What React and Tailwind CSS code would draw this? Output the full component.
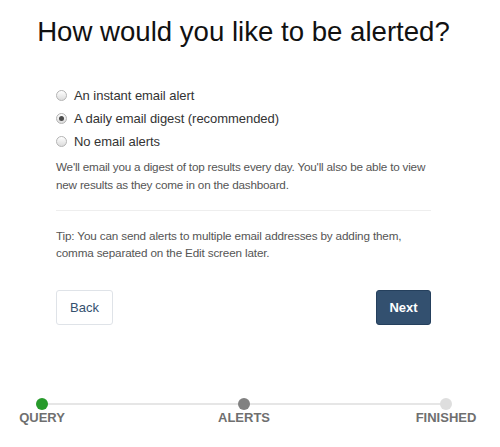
import React from "react";

function Radio({ label, checked }) {
  return (
    <label className="flex items-center h-[23px] text-[13px] text-[#333]">
      <span className="w-[11px] h-[11px] rounded-full border border-[#b4b4b4] bg-gradient-to-b from-[#ffffff] to-[#dcdcdc] flex items-center justify-center shrink-0">
        {checked && <span className="w-[5px] h-[5px] rounded-full bg-[#4a4a4a]" />}
      </span>
      <span className="ml-[7px] tracking-[-0.05px]">{label}</span>
    </label>
  );
}

function Step({ label, color }) {
  return (
    <div className="w-[12px] flex flex-col items-center">
      <div className={`w-[12px] h-[12px] rounded-full ${color}`} />
      <div className="whitespace-nowrap text-[13px] leading-[16px] font-bold text-[#6f6f6f]">{label}</div>
    </div>
  );
}

export default function App() {
  return (
    <div className="w-[487px] bg-white pb-[22px]" style={{ fontFamily: '"Liberation Sans", Arial, sans-serif' }}>
      <h1 className="pt-[16px] text-center text-[27.6px] leading-[32px] text-[#111] font-normal whitespace-nowrap">
        How would you like to be alerted?
      </h1>
      <div className="w-[375px] mx-auto mt-[36px]">
        <Radio label="An instant email alert" />
        <Radio label="A daily email digest (recommended)" checked />
        <Radio label="No email alerts" />
        <p className="mt-[5px] text-[11.7px] leading-[18px] text-[#555] tracking-[-0.2px]">
          We'll email you a digest of top results every day. You'll also be able to view new results as they come in on the dashboard.
        </p>
        <hr className="mt-[16px] border-0 h-px bg-[#eeeeee]" />
        <p className="mt-[16px] text-[11.7px] leading-[17px] text-[#555] tracking-[-0.15px]">
          Tip: You can send alerts to multiple email addresses by adding them, comma separated on the Edit screen later.
        </p>
        <div className="mt-[29px] flex justify-between">
          <button className="w-[57px] h-[35px] rounded-[3px] border border-[#dfe3e8] bg-white text-[13px] text-[#34506e]">
            Back
          </button>
          <button className="w-[55px] h-[35px] rounded-[3px] border border-[#25405d] bg-[#33506f] text-[13px] font-bold text-white">
            Next
          </button>
        </div>
      </div>
      <div className="ml-[36px] w-[416px] mt-[73px] relative">
        <div className="absolute left-[6px] right-[6px] top-[5px] h-[2px] bg-[#e6e6e6]" />
        <div className="relative flex justify-between">
          <Step label="QUERY" color="bg-[#279a2b]" />
          <Step label="ALERTS" color="bg-[#818181]" />
          <Step label="FINISHED" color="bg-[#dedede]" />
        </div>
      </div>
    </div>
  );
}
